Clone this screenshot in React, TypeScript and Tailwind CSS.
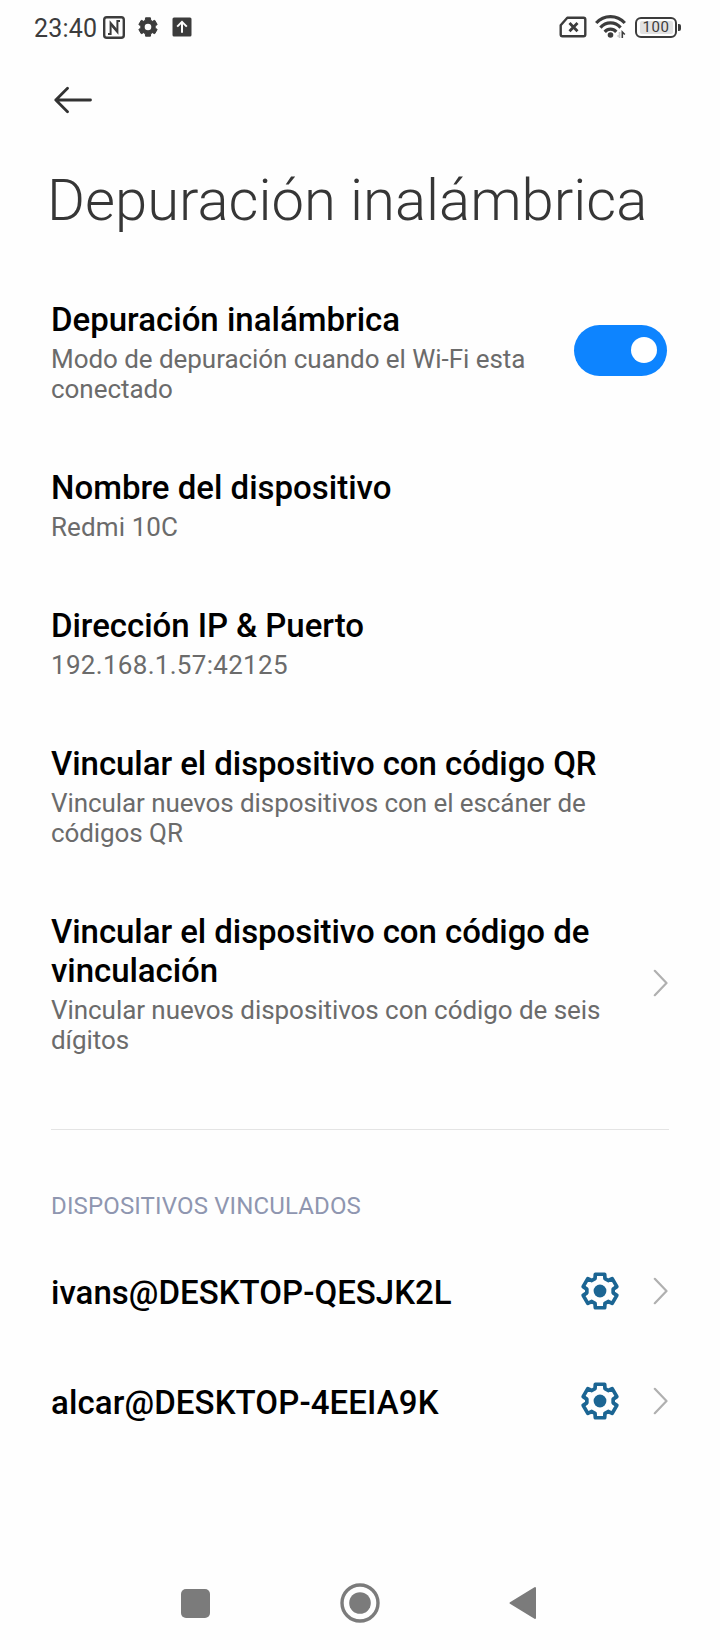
import React from "react";

const gear = (R: number, r: number, inner: number, outer: number) => {
  const pts: string[] = [];
  for (let i = 0; i < 6; i++) {
    const c = (i * 60 - 90) * (Math.PI / 180);
    const p = (rad: number, off: number) => {
      const a = c + (off * Math.PI) / 180;
      return `${(rad * Math.cos(a)).toFixed(2)} ${(rad * Math.sin(a)).toFixed(2)}`;
    };
    pts.push(p(r, -outer), p(R, -inner), p(R, inner), p(r, outer));
  }
  return `M${pts.join("L")}Z`;
};

const Chevron = () => (
  <svg width="15" height="28" viewBox="0 0 15 28" fill="none" className="mr-px shrink-0">
    <path d="M1.8 1.8 13.5 14 1.8 26.2" stroke="#b0b0b0" strokeWidth="2.2" strokeLinecap="round" strokeLinejoin="round" />
  </svg>
);

const DeviceGear = () => (
  <svg width="40" height="40" viewBox="-20 -20 40 40" className="shrink-0">
    <path d={gear(17.4, 13.3, 15.5, 22)} fill="none" stroke="#1b6593" strokeWidth="3.7" strokeLinejoin="round" />
    <circle r="6.4" fill="#1b6593" />
  </svg>
);

type ItemProps = {
  title: string;
  sub: string;
  textWidth: string;
  titleSpacing?: string;
  subSpacing?: string;
  end?: React.ReactNode;
};

const Item = ({ title, sub, textWidth, titleSpacing = "", subSpacing = "", end }: ItemProps) => (
  <div className="flex items-center justify-between pb-[65px]">
    <div className={textWidth}>
      <div className={`text-[33px] font-medium leading-[38.7px] text-black ${titleSpacing}`}>{title}</div>
      <div className={`mt-[4.3px] text-[26px] leading-[30px] text-[#6b6b6b] ${subSpacing}`}>{sub}</div>
    </div>
    {end}
  </div>
);

const Device = ({ name, spacing }: { name: string; spacing: string }) => (
  <div className="flex h-[110px] items-center justify-between">
    <div className={`pt-[3px] text-[33px] font-medium leading-[39px] text-black ${spacing}`}>{name}</div>
    <div className="flex items-center gap-[33px]">
      <DeviceGear />
      <Chevron />
    </div>
  </div>
);

export default function App() {
  return (
    <div className="flex h-[1650px] w-[720px] flex-col bg-[#fefefe] font-['Roboto',sans-serif]">
      <header className="flex h-[54px] items-center justify-between pl-[34px] pr-[38px]">
        <div className="flex items-center">
          <span className="w-[69px] whitespace-nowrap pt-[3px] text-[25px] leading-[30px] tracking-[0.2px] text-[#3c3c3c]">23:40</span>
          <svg width="22" height="23" viewBox="0 0 22 23" fill="none" stroke="#3c3c3c">
            <rect x="1.2" y="1.2" width="19.6" height="20.6" rx="2.6" strokeWidth="2.4" />
            <path d="M5 18H7.6V7L13.5 14" strokeWidth="2" />
            <path d="M17 5H14.4V16L8.5 9" strokeWidth="2" />
          </svg>
          <svg width="20" height="20" viewBox="-10 -10 20 20" className="ml-[13px]">
            <path d={gear(9.5, 7.2, 15, 22)} fill="#3c3c3c" stroke="#3c3c3c" strokeWidth="1" strokeLinejoin="round" />
            <circle r="3.3" fill="#fefefe" />
          </svg>
          <svg width="20" height="20" viewBox="0 0 20 20" fill="none" className="ml-[14px]">
            <rect x="0.5" y="0.5" width="19" height="19" rx="1.5" fill="#3c3c3c" />
            <path d="M10 15.8V5M5.2 9.6 10 4.8 14.8 9.6" stroke="#fefefe" strokeWidth="2" />
          </svg>
        </div>
        <div className="flex items-center">
          <svg width="28" height="22" viewBox="0 0 28 22" fill="none" stroke="#3c3c3c">
            <path d="M8.3 1.7H24.5Q26.3 1.7 26.3 3.5V18.5Q26.3 20.3 24.5 20.3H3.5Q1.7 20.3 1.7 18.5V9.2Z" strokeWidth="2.4" strokeLinejoin="round" />
            <path d="M10.5 7 18.5 15.2M18.5 7 10.5 15.2" strokeWidth="2.8" />
          </svg>
          <svg width="32" height="26" viewBox="0 0 32 26" fill="none" stroke="#3c3c3c" className="ml-[8px]">
            <path d="M1.2 9C9 0.4 22 0.4 29.8 9" strokeWidth="3.2" />
            <path d="M5.4 13.6C11 7.4 20 7.4 25.6 13.6" strokeWidth="3.2" />
            <path d="M9.7 17.8C13 14.2 18 14.2 21.3 17.8" strokeWidth="3.2" />
            <circle cx="15.5" cy="21" r="2.8" fill="#3c3c3c" stroke="none" />
            <path d="M24.5 18V24M22.3 22H24.5" stroke="#c4c4c4" strokeWidth="1.6" />
            <path d="M27.3 24V18L29.8 20.5" strokeWidth="1.6" />
          </svg>
          <div className="ml-[8px] flex h-[21px] w-[42px] items-center justify-center rounded-[6px] border-2 border-[#3c3c3c]">
            <span className="flex h-[13px] w-[33px] items-center justify-center rounded-[2px] bg-[#e2e2e2] text-[15px] leading-[15px] tracking-[0.6px] text-[#3c3c3c]">100</span>
          </div>
          <span className="ml-px mr-px h-[7px] w-[3px] rounded-r-[2px] bg-[#3c3c3c]" />
        </div>
      </header>

      <div className="flex h-[91px] items-center pl-[54px]">
        <svg width="39" height="28" viewBox="0 0 39 28" fill="none" stroke="#323232" strokeWidth="2.8" strokeLinecap="round" strokeLinejoin="round">
          <path d="M36.5 14H1.8M13.5 2.3 1.8 14 13.5 25.7" />
        </svg>
      </div>

      <h1 className="h-[156px] whitespace-nowrap pl-[47px] pt-[21px] text-[58px] font-light leading-[68px] text-[#363636]">
        Depuración inalámbrica
      </h1>

      <main className="flex flex-col px-[51px]">
        <Item
          title="Depuración inalámbrica"
          sub="Modo de depuración cuando el Wi-Fi esta conectado"
          textWidth="w-[490px]"
          subSpacing="tracking-[-0.05px]"
          end={
            <div className="mb-[5px] mr-[2px] flex h-[51px] w-[93px] items-center justify-end rounded-full bg-[#0d84ff] pr-[10px]">
              <span className="size-[26px] rounded-full bg-white" />
            </div>
          }
        />
        <Item title="Nombre del dispositivo" sub="Redmi 10C" textWidth="w-[560px]" subSpacing="tracking-[0.1px]" />
        <Item
          title="Dirección IP & Puerto"
          sub="192.168.1.57:42125"
          textWidth="w-[560px]"
          titleSpacing="tracking-[-0.05px]"
          subSpacing="tracking-[0.3px]"
        />
        <Item
          title="Vincular el dispositivo con código QR"
          sub="Vincular nuevos dispositivos con el escáner de códigos QR"
          textWidth="w-[570px]"
          titleSpacing="tracking-[-0.06px]"
          subSpacing="tracking-[-0.08px]"
        />
        <Item
          title="Vincular el dispositivo con código de vinculación"
          sub="Vincular nuevos dispositivos con código de seis dígitos"
          textWidth="w-[570px]"
          titleSpacing="tracking-[-0.06px]"
          subSpacing="tracking-[-0.06px]"
          end={<div className="mb-[2px]"><Chevron /></div>}
        />
        <div className="mt-[9.3px] h-px bg-[#e4e4e4]" />
        <h2 className="mt-[62px] text-[24px] leading-[28px] tracking-[0.14px] text-[#8f96b0]">DISPOSITIVOS VINCULADOS</h2>
        <div className="mt-[16px]">
          <Device name="ivans@DESKTOP-QESJK2L" spacing="tracking-[0.03px]" />
          <Device name="alcar@DESKTOP-4EEIA9K" spacing="tracking-[0.11px]" />
        </div>
      </main>

      <nav className="mt-auto flex h-[94px] items-center pl-[181px]">
        <span className="size-[29px] rounded-[5px] bg-[#7b7b7b]" />
        <svg width="40" height="40" viewBox="-20 -20 40 40" className="ml-[130px]">
          <circle r="18" fill="none" stroke="#7b7b7b" strokeWidth="3.4" />
          <circle r="10.8" fill="#7b7b7b" />
        </svg>
        <svg width="28" height="34" viewBox="0 0 28 34" className="ml-[129px]">
          <path d="M1.5 17 26 2V32Z" fill="#7b7b7b" stroke="#7b7b7b" strokeWidth="2" strokeLinejoin="round" />
        </svg>
      </nav>
    </div>
  );
}
